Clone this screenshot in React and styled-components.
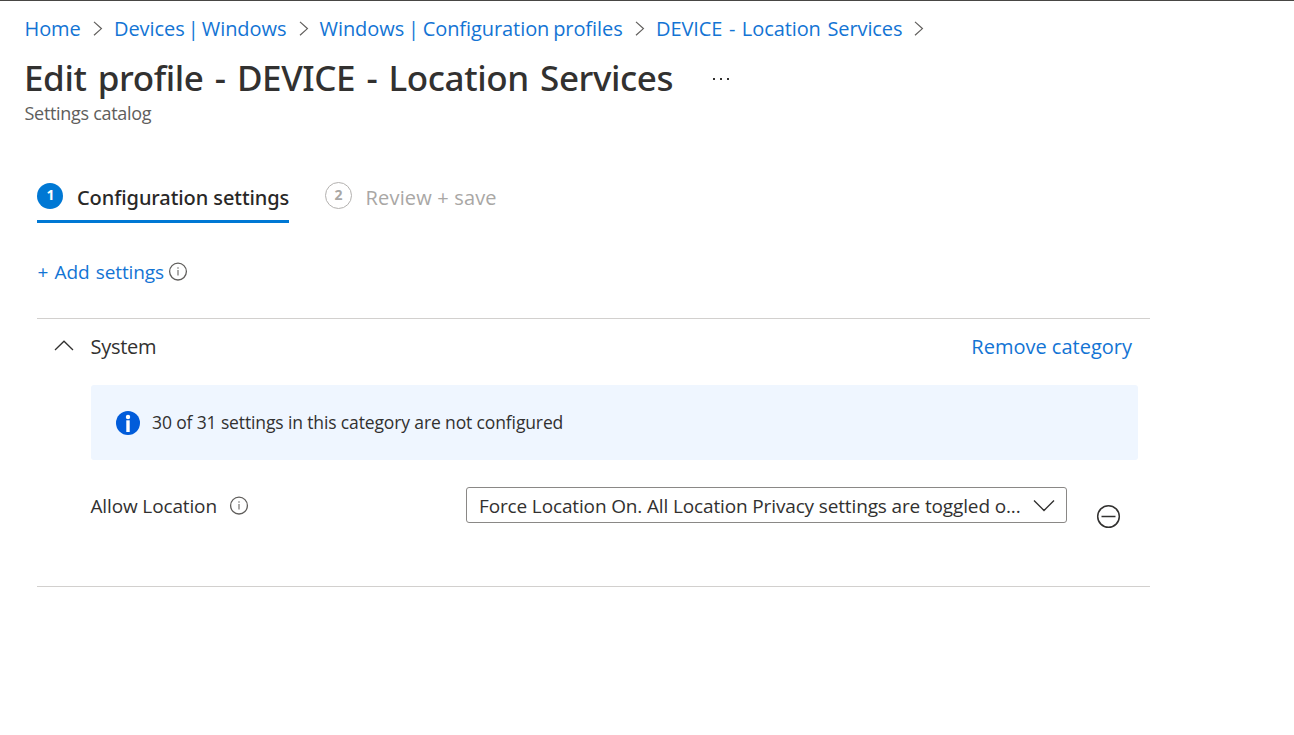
import React from "react";
import styled, { createGlobalStyle } from "styled-components";

const GlobalStyle = createGlobalStyle`
  * { box-sizing: border-box; }
  body {
    margin: 0;
    background: #fff;
    color: #323130;
    font-family: "Open Sans", "Noto Sans", sans-serif;
  }
  svg { display: block; flex: none; }
`;

const Page = styled.div`
  height: 735px;
  border-top: 1px solid #484644;
  overflow: hidden;
`;

const Breadcrumb = styled.nav`
  display: flex;
  align-items: center;
  height: 28px;
  margin: 14px 0 0 24.5px;
`;

const Crumb = styled.a`
  width: ${(p) => p.$width}px;
  font-size: 20px;
  line-height: 28px;
  letter-spacing: ${(p) => p.$spacing || 0}px;
  word-spacing: ${(p) => p.$words || 0}px;
  white-space: nowrap;
  color: #1374d4;
`;

const Separator = styled.span`
  width: 32px;
  padding-left: 11px;
`;

const TitleBar = styled.header`
  display: flex;
  align-items: center;
  height: 48px;
  margin: 11px 0 0 24px;
`;

const Title = styled.h1`
  width: 687px;
  margin: 0;
  font: 500 35px/48px "Noto Sans", sans-serif;
  letter-spacing: -0.41px;
  word-spacing: 2.6px;
  white-space: nowrap;
`;

const Subtitle = styled.p`
  margin: -1px 0 0 24.5px;
  font-size: 18px;
  line-height: 25px;
  letter-spacing: -0.3px;
  color: #605e5c;
`;

const Steps = styled.div`
  display: flex;
  gap: 36px;
  height: 44px;
  margin: 53px 0 0 37px;
`;

const Step = styled.div`
  display: flex;
  height: 44px;
  border-bottom: 3px solid ${(p) => (p.$active ? "#0078d4" : "transparent")};
  width: ${(p) => p.$width}px;
`;

const StepNumber = styled.span`
  flex: none;
  display: flex;
  align-items: center;
  justify-content: center;
  width: ${(p) => (p.$active ? 26 : 27)}px;
  height: ${(p) => (p.$active ? 26 : 27)}px;
  margin-top: ${(p) => (p.$active ? 4 : 3)}px;
  margin-left: ${(p) => (p.$active ? 0.4 : 0)}px;
  border-radius: 50%;
  border: ${(p) => (p.$active ? "none" : "1.5px solid #b3b1af")};
  background: ${(p) => (p.$active ? "#0078d4" : "transparent")};
  color: ${(p) => (p.$active ? "#fff" : "#a9a7a5")};
  font-size: 14px;
  font-weight: 700;
  line-height: 20px;
  padding-bottom: 2px;
`;

const StepLabel = styled.span`
  margin-left: 13.6px;
  font-family: ${(p) => (p.$active ? '"Noto Sans"' : '"Open Sans"')}, sans-serif;
  font-size: 20px;
  font-weight: ${(p) => (p.$active ? 500 : 400)};
  line-height: 38px;
  letter-spacing: ${(p) => (p.$active ? -0.08 : 0.16)}px;
  white-space: nowrap;
  color: ${(p) => (p.$active ? "#292827" : "#a9a7a5")};
`;

const AddRow = styled.div`
  display: flex;
  align-items: center;
  height: 28px;
  margin: 35px 0 32px 37.5px;
`;

const AddLink = styled.a`
  width: 130.5px;
  font-size: 19px;
  line-height: 28px;
  letter-spacing: -0.14px;
  word-spacing: 1.6px;
  white-space: nowrap;
  color: #1374d4;
`;

const Category = styled.section`
  width: 1113px;
  height: 269px;
  margin-left: 37px;
  border-top: 1px solid #d2d0ce;
  border-bottom: 1px solid #d2d0ce;
`;

const CategoryHeader = styled.div`
  display: flex;
  align-items: center;
  height: 54px;
  padding: 0 18px 0 17px;
  font-size: 20px;
`;

const CategoryName = styled.span`
  flex: 1;
  margin-left: 16.6px;
  letter-spacing: -0.3px;
`;

const RemoveLink = styled.a`
  color: #1374d4;
`;

const Banner = styled.div`
  display: flex;
  align-items: center;
  gap: 12px;
  height: 75px;
  margin: 12px 12px 0 54px;
  padding-left: 25px;
  border-radius: 3px;
  background: #eff6ff;
  font-size: 17.5px;
  line-height: 24px;
  letter-spacing: -0.13px;
`;

const BannerText = styled.span`
  padding-bottom: 2px;
`;

const SettingRow = styled.div`
  display: flex;
  align-items: flex-start;
  margin: 27px 0 0 53.5px;
`;

const SettingLabel = styled.div`
  display: flex;
  align-items: center;
  gap: 12.5px;
  width: 375.5px;
  height: 37px;
  font-size: 19px;
  letter-spacing: -0.14px;
`;

const Select = styled.div`
  display: flex;
  align-items: center;
  justify-content: space-between;
  width: 601px;
  height: 36px;
  padding: 1px 11px 0 12px;
  border: 1px solid #8a8886;
  border-radius: 3px;
  font-size: 19px;
  letter-spacing: -0.14px;
  white-space: nowrap;
`;

const RemoveButton = styled.span`
  margin: 17px 0 0 29px;
`;

const Chevron = () => (
  <Separator>
    <svg width="10" height="16" viewBox="0 0 10 16" fill="none" stroke="#605e5c" strokeWidth="1.2">
      <path d="M1 .9 8.4 7.6 1 14.3" />
    </svg>
  </Separator>
);

const InfoOutline = () => (
  <svg width="20" height="20" viewBox="0 0 20 20" fill="none" stroke="#605e5c">
    <circle cx="10" cy="9.6" r="8.4" strokeWidth="1.3" />
    <path d="M10 8.1v5.5M10 5.3v1.4" strokeWidth="1.4" stroke="#8a8886" />
  </svg>
);

const crumbs = [
  { label: "Home", width: 57.5, spacing: -0.1 },
  { label: "Devices | Windows", width: 173.5, spacing: -0.07, words: -2 },
  { label: "Windows | Configuration profiles", width: 304.5, spacing: -0.07, words: -1.3 },
  { label: "DEVICE - Location Services", width: 247, spacing: -0.09, words: 1.5 },
];

export default function App() {
  return (
    <Page>
      <GlobalStyle />
      <Breadcrumb>
        {crumbs.map((c) => (
          <React.Fragment key={c.label}>
            <Crumb $width={c.width} $spacing={c.spacing} $words={c.words}>{c.label}</Crumb>
            <Chevron />
          </React.Fragment>
        ))}
      </Breadcrumb>
      <TitleBar>
        <Title>Edit profile - DEVICE - Location Services</Title>
        <svg width="20" height="6" viewBox="0 0 20 6" fill="#323130">
          <rect x="2" y="3" width="2" height="2" />
          <rect x="9" y="3" width="2" height="2" />
          <rect x="16" y="3" width="2" height="2" />
        </svg>
      </TitleBar>
      <Subtitle>Settings catalog</Subtitle>
      <Steps>
        <Step $active $width={252}>
          <StepNumber $active>1</StepNumber>
          <StepLabel $active>Configuration settings</StepLabel>
        </Step>
        <Step $width={172}>
          <StepNumber>2</StepNumber>
          <StepLabel>Review + save</StepLabel>
        </Step>
      </Steps>
      <AddRow>
        <AddLink>+ Add settings</AddLink>
        <InfoOutline />
      </AddRow>
      <Category>
        <CategoryHeader>
          <svg width="20" height="12" viewBox="0 0 20 12" fill="none" stroke="#323130" strokeWidth="1.3">
            <path d="M1 10 10 1.2l9 8.8" />
          </svg>
          <CategoryName>System</CategoryName>
          <RemoveLink>Remove category</RemoveLink>
        </CategoryHeader>
        <Banner>
          <svg width="24" height="24" viewBox="0 0 24 24" fill="#fff">
            <circle cx="12" cy="12" r="12" fill="#015cda" />
            <circle cx="12" cy="6" r="2.2" />
            <rect x="10.3" y="9.3" width="3.4" height="11.7" />
          </svg>
          <BannerText>30 of 31 settings in this category are not configured</BannerText>
        </Banner>
        <SettingRow>
          <SettingLabel>
            <span>Allow Location</span>
            <InfoOutline />
          </SettingLabel>
          <Select>
            <span>Force Location On. All Location Privacy settings are toggled o...</span>
            <svg width="22" height="12" viewBox="0 0 22 12" fill="none" stroke="#323130" strokeWidth="1.4">
              <path d="M1 .6 11 10.4 21 .6" />
            </svg>
          </Select>
          <RemoveButton>
            <svg width="25" height="25" viewBox="0 0 25 25" fill="none" stroke="#323130" strokeWidth="1.5">
              <circle cx="12.5" cy="12.5" r="10.8" />
              <path d="M5.5 12.5h14" />
            </svg>
          </RemoveButton>
        </SettingRow>
      </Category>
    </Page>
  );
}
